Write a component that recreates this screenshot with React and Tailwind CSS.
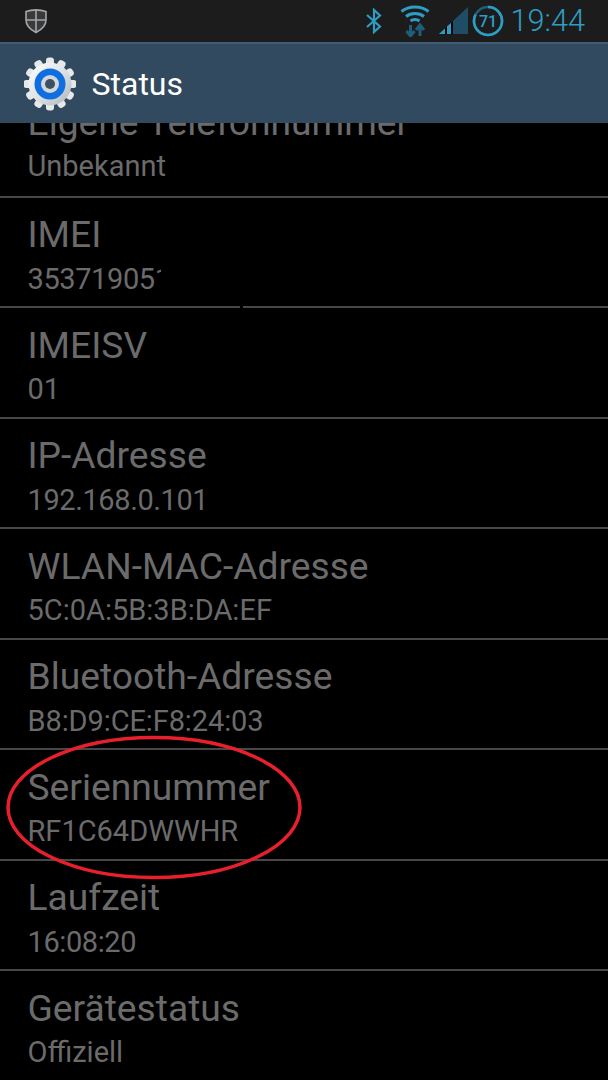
const ROWS = [
  ['Eigene Telefonnummer', 'Unbekannt'],
  ['IMEI', '353719051', 'tracking-[-0.4px]'],
  ['IMEISV', '01'],
  ['IP-Adresse', '192.168.0.101', 'tracking-[-0.4px]'],
  ['WLAN-MAC-Adresse', '5C:0A:5B:3B:DA:EF'],
  ['Bluetooth-Adresse', 'B8:D9:CE:F8:24:03', 'tracking-[-0.1px]'],
  ['Seriennummer', 'RF1C64DWWHR'],
  ['Laufzeit', '16:08:20', 'tracking-[-0.4px]'],
  ['Gerätestatus', 'Offiziell'],
]

function ShieldIcon() {
  return (
    <svg width="24" height="26" viewBox="0 0 24 26" className="ml-[24px]">
      <path d="M2 3.5 C8 1.5 16 1.5 22 3.5 L22 12 C22 18 17 22 12 24.5 C7 22 2 18 2 12 Z" fill="#3a3a3a" stroke="#a3a8ab" strokeWidth="1.6" />
      <path d="M12 2 V24 M2 12 H22" stroke="#a3a8ab" strokeWidth="1.6" />
    </svg>
  )
}

function BluetoothIcon() {
  return (
    <svg width="18" height="26" viewBox="0 0 18 26" fill="none" stroke="#2f9cc4" strokeWidth="2.2">
      <path d="M2 7 L15 18.5 L9 24 V2 L15 7.5 L2 19" />
    </svg>
  )
}

function WifiIcon() {
  return (
    <svg width="30" height="32" viewBox="0 0 30 32" fill="none">
      <path d="M1.5 6.5 C9 0.5 21 0.5 28.500 6.500" stroke="#2f9cc4" strokeWidth="3" />
      <path d="M6 11.500 C11 7.500 19 7.500 24 11.500" stroke="#2f9cc4" strokeWidth="3" />
      <path d="M10.500 16 C13 14 17 14 19.500 16" stroke="#2f9cc4" strokeWidth="3" />
      <path d="M10.500 20 V30 M6.500 26 L10.500 31 L14.500 26" stroke="#1f5d78" strokeWidth="3" />
      <path d="M20 31 V21 M16 25 L20 20 L24 25" stroke="#1f5d78" strokeWidth="3" />
    </svg>
  )
}

function SignalIcon() {
  return (
    <svg width="30" height="28" viewBox="0 0 30 28">
      <path d="M0 27 L29 0 V27 Z" fill="#1f4d66" />
      <path d="M0 27 L6 21.500 V27 Z" fill="#2f9cc4" />
      <path d="M8 19.500 L12 16 V27 H8 Z" fill="#2f9cc4" />
      <path d="M6 21.500 L8 19.500 V27 H6 Z M12 16 L14 14 V27 H12 Z" fill="#000" />
    </svg>
  )
}

function BatteryIcon() {
  return (
    <svg width="32" height="32" viewBox="0 0 32 32" fill="none">
      <circle cx="16" cy="16" r="14" stroke="#1f5d78" strokeWidth="2.6" />
      <path d="M16 2 A14 14 0 1 1 3.500 9.700" stroke="#2f9cc4" strokeWidth="2.600" />
      <text x="16" y="21.500" textAnchor="middle" fill="#2f9cc4" fontSize="16" fontWeight="500" fontFamily="Roboto, sans-serif">71</text>
    </svg>
  )
}

function GearIcon() {
  const teeth = [0, 30, 60, 90, 120, 150, 180, 210, 240, 270, 300, 330]
  return (
    <svg width="52" height="54" viewBox="0 0 52 54" className="ml-[24px]">
      <defs>
        <linearGradient id="steel" x1="0" y1="0" x2="1" y2="1">
          <stop offset="0" stopColor="#ffffff" />
          <stop offset="0.5" stopColor="#dfe3e6" />
          <stop offset="1" stopColor="#aeb4b9" />
        </linearGradient>
      </defs>
      <g transform="translate(26 27)">
        {teeth.map((a) => (
          <rect key={a} x="-4" y="-26.500" width="8" height="10" rx="3" fill="#e6e8ea" transform={`rotate(${a})`} />
        ))}
        <circle r="21.500" fill="url(#steel)" />
        <circle r="15.500" fill="#0f6fe0" />
        <circle r="9" fill="#d4d7da" />
        <circle r="5" fill="#3d5063" />
      </g>
    </svg>
  )
}

function InfoRow({ title, value, track, first }) {
  return (
    <div className={`h-[110.5px] shrink-0 pl-[27.5px] flex flex-col ${first ? '' : 'border-t-2 border-[#484848]'}`}>
      <div className="mt-[13.5px] text-[37.2px] leading-[46px] text-[#6b6b6b] whitespace-nowrap">{title}</div>
      {title === 'IMEI' ? (
        <div className={`mt-[3.5px] w-[133px] overflow-hidden text-[29px] leading-[36px] text-[#6b6b6b] ${track}`}>{value}</div>
      ) : (
        <div className={`mt-[3.5px] text-[29px] leading-[36px] text-[#6b6b6b] ${track || ''}`}>{value}</div>
      )}
    </div>
  )
}

export default function App() {
  return (
    <div className="relative w-[608px] h-[1080px] overflow-hidden bg-black font-['Roboto',sans-serif]">
      {/* status bar */}
      <div className="h-[42px] bg-[#1c1c1c] flex items-center">
        <ShieldIcon />
        <div className="ml-auto flex items-center pr-[23px]">
          <BluetoothIcon />
          <div className="ml-[17px]"><WifiIcon /></div>
          <div className="ml-[9px]"><SignalIcon /></div>
          <div className="ml-[3px]"><BatteryIcon /></div>
          <span className="ml-[6px] text-[30.7px] leading-[36px] font-light text-[#2f9cc4]">19:44</span>
        </div>
      </div>
      {/* action bar */}
      <div className="h-[81px] bg-[#324a5f] border-t-2 border-[#3f5d75] flex items-center">
        <GearIcon />
        <span className="ml-[15.500px] text-[32px] text-white">Status</span>
      </div>
      {/* list, scrolled a little */}
      <div className="h-[957px] overflow-hidden">
        <div className="-mt-[38px] flex flex-col">
          {ROWS.map(([title, value, track], i) => (
            <InfoRow key={title} title={title} value={value} track={track} first={i === 0} />
          ))}
        </div>
      </div>
      {/* small nick in the divider under the IMEI */}
      <div className="absolute left-[240px] top-[306px] w-[3px] h-[3px] bg-black" />
      {/* hand drawn circle */}
      <svg width="320" height="160" viewBox="0 0 320 160" className="absolute left-0 top-[730px]" fill="none">
        <ellipse cx="154" cy="77.500" rx="146" ry="70" stroke="#e8202e" strokeWidth="3.500" />
      </svg>
    </div>
  )
}
